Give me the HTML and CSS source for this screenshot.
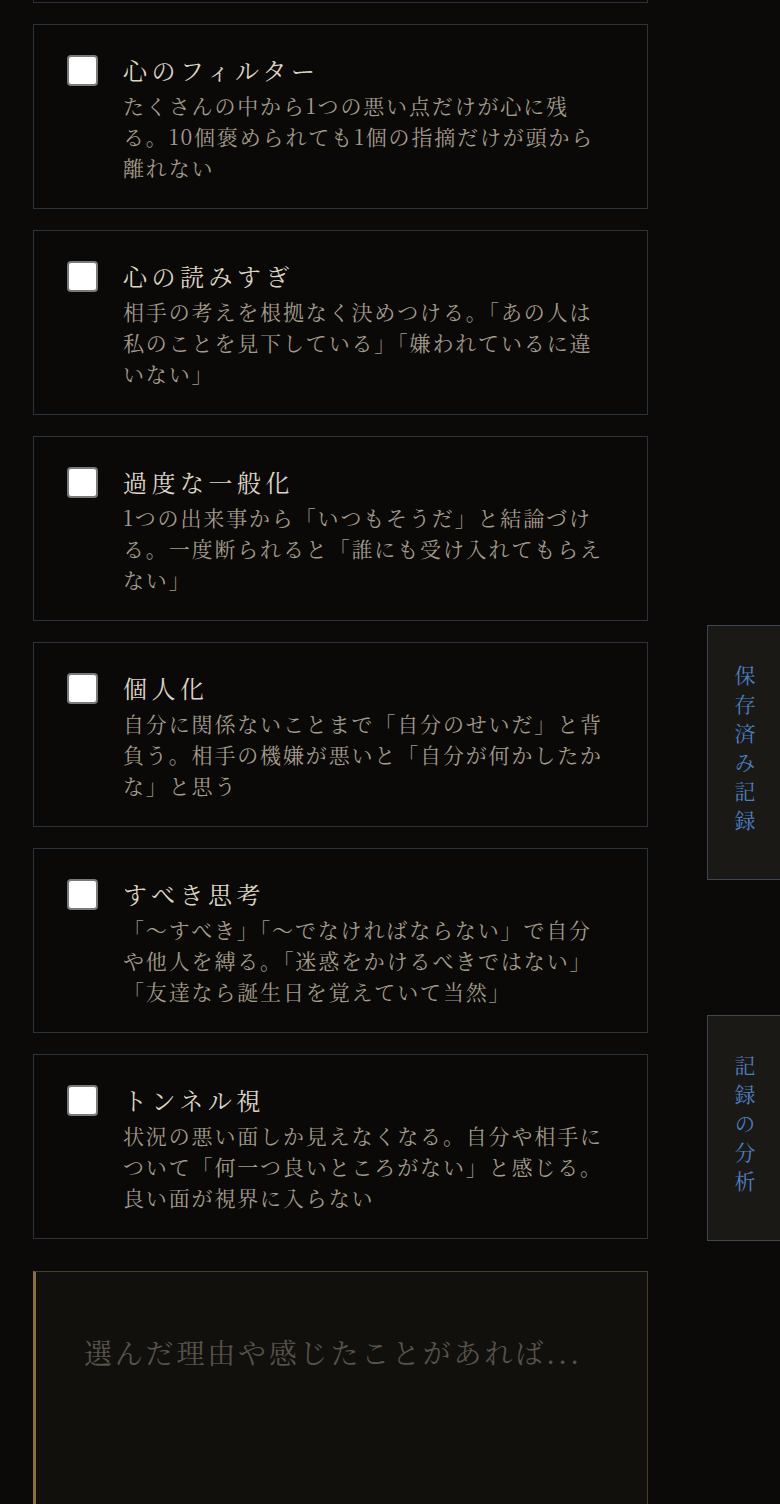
FILE: index.html
```html
<!DOCTYPE html>
<html lang="ja">
<head>
<meta charset="utf-8">
<title>認知の歪みチェック</title>
<link rel="stylesheet" href="styles.css">
</head>
<body>
<main class="page">
  <ul class="list">
    <li class="card-tail" aria-hidden="true"></li>
    <li class="card">
      <input type="checkbox" class="check" aria-label="心のフィルター">
      <div class="body">
        <div class="title">心のフィルター</div>
        <p class="desc">たくさんの中から1つの悪い点だけが心に残る。10個褒められても1個の指摘だけが頭から離れない</p>
      </div>
    </li>
    <li class="card">
      <input type="checkbox" class="check" aria-label="心の読みすぎ">
      <div class="body">
        <div class="title">心の読みすぎ</div>
        <p class="desc">相手の考えを根拠なく決めつける。「あの人は私のことを見下している」「嫌われているに違いない」</p>
      </div>
    </li>
    <li class="card">
      <input type="checkbox" class="check" aria-label="過度な一般化">
      <div class="body">
        <div class="title">過度な一般化</div>
        <p class="desc">1つの出来事から「いつもそうだ」と結論づける。一度断られると「誰にも受け入れてもらえない」</p>
      </div>
    </li>
    <li class="card">
      <input type="checkbox" class="check" aria-label="個人化">
      <div class="body">
        <div class="title">個人化</div>
        <p class="desc">自分に関係ないことまで「自分のせいだ」と背負う。相手の機嫌が悪いと「自分が何かしたかな」と思う</p>
      </div>
    </li>
    <li class="card">
      <input type="checkbox" class="check" aria-label="すべき思考">
      <div class="body">
        <div class="title">すべき思考</div>
        <p class="desc">「〜すべき」「〜でなければならない」で自分や他人を縛る。「迷惑をかけるべきではない」「友達なら誕生日を覚えていて当然」</p>
      </div>
    </li>
    <li class="card">
      <input type="checkbox" class="check" aria-label="トンネル視">
      <div class="body">
        <div class="title">トンネル視</div>
        <p class="desc">状況の悪い面しか見えなくなる。自分や相手について「何一つ良いところがない」と感じる。良い面が視界に入らない</p>
      </div>
    </li>
  </ul>
  <textarea class="note" placeholder="選んだ理由や感じたことがあれば..."></textarea>
</main>
<button class="side-tab tab-saved" type="button">保存済み記録</button>
<button class="side-tab tab-analysis" type="button">記録の分析</button>
</body>
</html>
```
FILE: styles.css
```css
* { box-sizing: border-box; }

html, body {
  margin: 0;
  padding: 0;
  background: #0b0a09;
}

body {
  font-family: "Noto Serif CJK JP", "Noto Serif JP", "Liberation Serif", "Noto Sans CJK JP", serif;
  color: #ddd5c2;
}

.page {
  padding: 0 132px 0 33px;
  width: 780px;
}

.list {
  list-style: none;
  margin: 0;
  padding: 0;
  display: flex;
  flex-direction: column;
  gap: 21px;
}

.card-tail {
  height: 3px;
  border: 1px solid #2a323b;
  border-top: 0;
  background: #0a0908;
}

.card {
  display: flex;
  align-items: flex-start;
  gap: 25px;
  border: 1px solid #2a323b;
  background: #0a0908;
  padding: 27px 38px 25px 33px;
  height: 185px;
}

.check {
  appearance: none;
  -webkit-appearance: none;
  flex: none;
  width: 31px;
  height: 31px;
  margin: 3px 0 0 0;
  background: #ffffff;
  border: 2px solid #7a7a7a;
  border-radius: 4px;
}

.body {
  flex: 1;
  min-width: 0;
}

.title {
  font-size: 24px;
  line-height: 36px;
  letter-spacing: 4.5px;
  color: #ddd5c2;
  margin-bottom: 2px;
}

.desc {
  margin: 0;
  font-size: 21px;
  line-height: 31px;
  letter-spacing: 1.85px;
  color: #a39b8b;
}

.note {
  display: block;
  width: 615px;
  height: 300px;
  margin-top: 32px;
  padding: 58px 48px;
  background: #11100d;
  border: 1px solid #4a3f26;
  border-left: 3px solid #8a7236;
  color: #ddd5c2;
  font-family: inherit;
  font-size: 28px;
  line-height: 44px;
  letter-spacing: 2.8px;
  resize: none;
  outline: none;
}

.note::placeholder {
  color: #57524a;
}

.side-tab {
  position: fixed;
  right: -2px;
  width: 75px;
  margin: 0;
  padding: 39px 0 30px;
  background: #1a1915;
  border: 1px solid #3c4751;
  color: #4a7fc0;
  font-family: "Noto Serif CJK JP", "Noto Serif JP", "Noto Sans CJK JP", serif;
  font-size: 21px;
  line-height: 1;
  letter-spacing: 8px;
  writing-mode: vertical-rl;
  text-orientation: upright;
  display: flex;
  align-items: center;
  justify-content: flex-start;
  cursor: pointer;
}

.tab-saved {
  top: 625px;
  height: 255px;
}

.tab-analysis {
  top: 1015px;
  height: 226px;
}
```
